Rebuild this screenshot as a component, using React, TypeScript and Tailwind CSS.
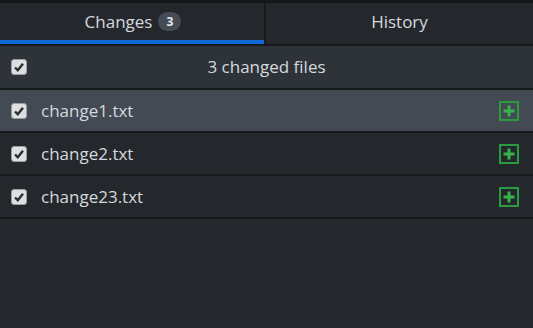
import React from "react";

const files = ["change1.txt", "change2.txt", "change23.txt"];

const Check = () => (
  <span className="flex h-4 w-4 items-center justify-center rounded-[3px] border border-[#9a9da1] bg-[#dedfe0]">
    <svg width="12" height="12" viewBox="0 0 12 12">
      <path d="M2 6.5 L4.8 9.2 L10 2.8" fill="none" stroke="#2b2d30" strokeWidth="2.4" strokeLinejoin="miter" />
    </svg>
  </span>
);

const AddedIcon = () => (
  <span className="flex h-5 w-5 items-center justify-center border-2 border-[#2a9c3f]">
    <svg width="12" height="12" viewBox="0 0 12 12">
      <rect x="4.5" y="0.5" width="3" height="11" fill="#34b34b" />
      <rect x="0.5" y="4.5" width="11" height="3" fill="#34b34b" />
    </svg>
  </span>
);

const App = () => {
  return (
    <main
      className="flex h-[328px] w-[533px] flex-col bg-[#24272b] text-[#d5d9dd]"
      style={{ fontFamily: '"Open Sans", "Noto Sans", sans-serif' }}
    >
      <div className="h-[3px] bg-[#151617]" />
      <nav className="flex h-[43px] border-b-2 border-[#17191b] bg-[#24282d]">
        <div className="flex w-[264px] flex-col">
          <div className="flex flex-1 items-center justify-center gap-[6px] pl-[2px]">
            <span className="text-[17px]">Changes</span>
            <span className="flex h-[19px] w-[23px] items-center justify-center rounded-full bg-[#464c56] text-[12px] font-bold text-[#e6e8ea]">
              3
            </span>
          </div>
          <div className="h-[4px] bg-[#0f69d6]" />
        </div>
        <div className="w-[2px] bg-[#17191b]" />
        <div className="flex flex-1 items-center justify-center pb-[4px] text-[17px]">History</div>
      </nav>
      <section className="flex h-[44px] items-center border-b-2 border-[#17191b] bg-[#2e333a] pl-[11px]">
        <Check />
        <span className="flex-1 pr-[27px] text-center text-[17px]">3 changed files</span>
      </section>
      <ul>
        {files.map((f, i) => (
          <li
            key={f}
            className={`flex h-[43px] items-center border-b-2 border-[#17191b] pl-[11px] pr-[14px] ${
              i === 0 ? "bg-[#434a54]" : "bg-[#24282d]"
            }`}
          >
            <Check />
            <span className="ml-[14px] flex-1 text-[17px]">{f}</span>
            <AddedIcon />
          </li>
        ))}
      </ul>
    </main>
  );
};

export default App;
